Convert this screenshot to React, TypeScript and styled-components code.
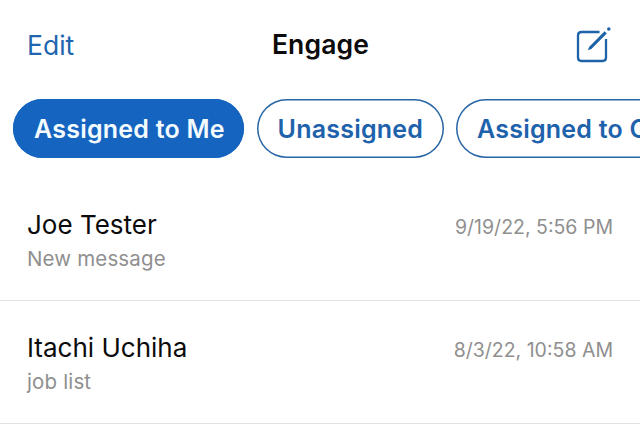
import React from "react";
import styled, { createGlobalStyle } from "styled-components";

const Global = createGlobalStyle`
  * { box-sizing: border-box; }
  body { margin: 0; background: #fff; font-family: Inter, "Liberation Sans", sans-serif; overflow: hidden; }
  button { font: inherit; background: none; border: 0; padding: 0; margin: 0; }
`;

const Screen = styled.main`
  width: 640px;
  height: 439px;
  background: #fff;
  overflow: hidden;
`;

const Header = styled.header`
  display: grid;
  grid-template-columns: 1fr auto 1fr;
  align-items: center;
  height: 88px;
  padding: 0 28px 0 27px;
`;

const EditButton = styled.button`
  justify-self: start;
  && { font-size: 26.5px; }
  line-height: 32px;
  padding-top: 1px;
  color: #1e66ae;
`;

const Title = styled.h1`
  margin: 0;
  padding-left: 2px;
  font-size: 26.5px;
  line-height: 32px;
  font-weight: 600;
  letter-spacing: 0.15px;
  color: #0b0b0b;
`;

const ComposeButton = styled.button`
  justify-self: end;
  display: flex;
  color: #1e63a8;
`;

const Filters = styled.nav`
  display: flex;
  gap: 12.5px;
  padding: 11px 0 0 13px;
`;

const Pill = styled.button<{ $active?: boolean; $width: number }>`
  && {
    flex: 0 0 ${(p) => p.$width}px;
    height: 59px;
    padding-left: 21px;
    border-radius: 30px;
    box-shadow: inset 0 0 0 1.5px ${(p) => (p.$active ? "#1565c0" : "#2765a5")};
    background: ${(p) => (p.$active ? "#1565c0" : "#fff")};
    color: ${(p) => (p.$active ? "#f3fbff" : "#1e62ac")};
    font-size: 25px;
    font-weight: 600;
    letter-spacing: 0.23px;
    text-align: left;
    white-space: nowrap;
  }
`;

const List = styled.ul`
  list-style: none;
  margin: 20px 0 0;
  padding: 0;
`;

const Row = styled.li`
  display: flex;
  justify-content: space-between;
  height: 123px;
  padding: 31px 27px 0;
  border-bottom: 1px solid #e2e2e2;
`;

const Name = styled.div`
  font-size: 26px;
  line-height: 32px;
  color: #0b0b0b;
`;

const Preview = styled.div`
  margin-top: 4px;
  font-size: 20.5px;
  line-height: 28px;
  letter-spacing: 0.15px;
  color: #8f8f8f;
`;

const Time = styled.time`
  font-size: 19.5px;
  line-height: 36px;
  color: #8f8f8f;
`;

const conversations = [
  { name: "Joe Tester", preview: "New message", time: "9/19/22, 5:56 PM" },
  { name: "Itachi Uchiha", preview: "job list", time: "8/3/22, 10:58 AM" },
];

export default function App() {
  return (
    <Screen>
      <Global />
      <Header>
        <EditButton>Edit</EditButton>
        <Title>Engage</Title>
        <ComposeButton aria-label="Compose">
          <svg width="36" height="38" viewBox="0 0 36 38" fill="none" stroke="currentColor">
            <path strokeWidth="2.3" d="M23.500 7H5.500Q2 7 2 10.500V32.500Q2 36 5.500 36H26.500Q30 36 30 32.500V14" />
            <path fill="currentColor" stroke="none" d="M11.800 25.200L13.300 21.800L28.600 6.300L30.800 8.400L15.400 23.900Z" />
            <circle cx="32.800" cy="4" r="1.800" fill="currentColor" stroke="none" />
          </svg>
        </ComposeButton>
      </Header>
      <Filters>
        <Pill $active $width={231}>Assigned to Me</Pill>
        <Pill $width={187}>Unassigned</Pill>
        <Pill $width={240}>Assigned to Others</Pill>
      </Filters>
      <List>
        {conversations.map((c) => (
          <Row key={c.name}>
            <div>
              <Name>{c.name}</Name>
              <Preview>{c.preview}</Preview>
            </div>
            <Time>{c.time}</Time>
          </Row>
        ))}
      </List>
    </Screen>
  );
}
